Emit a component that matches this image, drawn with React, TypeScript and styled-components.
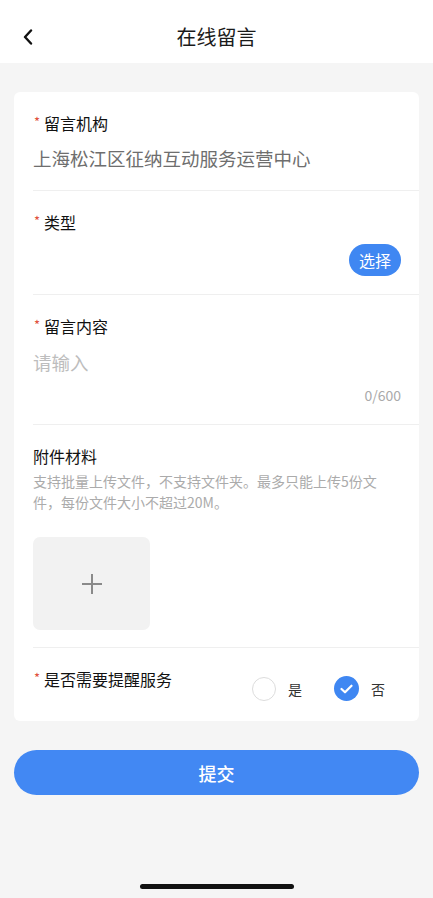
import React, { useState } from "react";
import styled, { createGlobalStyle } from "styled-components";

const GlobalStyle = createGlobalStyle`
  html, body { margin: 0; padding: 0; background: #f5f5f5; }
  body { font-family: "Noto Sans CJK SC", "Noto Sans", sans-serif; -webkit-font-smoothing: antialiased; }
  * { box-sizing: border-box; }
`;

const Page = styled.div`
  width: 433px;
  min-height: 898px;
  background: #f5f5f5;
  display: flex;
  flex-direction: column;
`;

const Header = styled.header`
  height: 63px;
  padding-top: 10px;
  background: #fff;
  display: flex;
  align-items: center;
  justify-content: center;
  position: relative;
`;

const BackButton = styled.button`
  position: absolute;
  left: 18px;
  top: 26px;
  width: 20px;
  height: 22px;
  padding: 0;
  border: none;
  background: transparent;
  display: flex;
  align-items: center;
  justify-content: center;
`;

const Title = styled.h1`
  margin: 0;
  font-size: 20px;
  font-weight: 400;
  color: #1a1a1a;
  line-height: 28px;
`;

const Card = styled.div`
  margin: 29px 14px 0;
  background: #fff;
  border-radius: 6px;
  overflow: hidden;
`;

const Section = styled.div<{ $last?: boolean; $pb: number }>`
  margin-left: 19px;
  padding: 20px 18px ${(p) => p.$pb}px 0;
  border-bottom: ${(p) => (p.$last ? "none" : "1px solid #efefef")};
`;

const Label = styled.div`
  display: flex;
  align-items: flex-start;
  height: 22px;
  font-size: 16px;
  line-height: 22px;
  color: #111;
  font-weight: 400;
`;

const Star = styled.span`
  color: #e0503c;
  font-size: 13px;
  width: 10px;
  margin-left: 1px;
  line-height: 20px;
`;

const Value = styled.div<{ $placeholder?: boolean }>`
  margin-top: ${(p) => (p.$placeholder ? 12 : 11)}px;
  font-size: 18.5px;
  line-height: 26px;
  height: 26px;
  color: ${(p) => (p.$placeholder ? "#bdbdbd" : "#6e6e6e")};
`;

const RightRow = styled.div`
  display: flex;
  justify-content: flex-end;
  margin-top: 11px;
`;

const Pill = styled.button`
  height: 32px;
  padding: 0 10px;
  border: none;
  border-radius: 16px;
  background: #3f87f2;
  color: #fff;
  font-family: inherit;
  font-size: 16px;
  line-height: 32px;
`;

const Counter = styled.div`
  margin-top: 10px;
  text-align: right;
  font-size: 14px;
  line-height: 20px;
  height: 20px;
  color: #aaa;
`;

const Desc = styled.div`
  margin-top: 4px;
  max-width: 350px;
  font-size: 14px;
  line-height: 21px;
  color: #ababab;
`;

const UploadBox = styled.div`
  margin-top: 24px;
  width: 117px;
  height: 93px;
  border-radius: 7px;
  background: #f2f2f2;
  display: flex;
  align-items: center;
  justify-content: center;
`;

const RemindRow = styled.div`
  display: flex;
  align-items: flex-start;
`;

const RadioGroup = styled.div`
  margin-left: auto;
  margin-right: 16px;
  margin-top: 8px;
  display: flex;
  gap: 32px;
`;

const RadioItem = styled.label`
  display: flex;
  align-items: center;
  gap: 12px;
  font-size: 14px;
  color: #333;
  height: 25px;
  cursor: pointer;
`;

const Circle = styled.span<{ $checked: boolean }>`
  width: ${(p) => (p.$checked ? 25 : 24)}px;
  height: ${(p) => (p.$checked ? 25 : 24)}px;
  border-radius: 50%;
  border: ${(p) => (p.$checked ? "none" : "1.5px solid #dcdcdc")};
  background: ${(p) => (p.$checked ? "#3f87f2" : "#fff")};
  display: flex;
  align-items: center;
  justify-content: center;
`;

const Submit = styled.button`
  margin: 29px 14px 0;
  height: 45px;
  border: none;
  border-radius: 23px;
  background: #4288f3;
  color: #fff;
  font-family: inherit;
  font-size: 18px;
  font-weight: 500;
`;

const HomeIndicator = styled.div`
  margin: 89px auto 0;
  width: 154px;
  height: 5px;
  border-radius: 3px;
  background: #111;
`;

const Check = () => (
  <svg width="13" height="10" viewBox="0 0 13 10">
    <path d="M1.5 5 L5 8.3 L11.5 1.7" fill="none" stroke="#fff" strokeWidth="2.2" strokeLinecap="round" strokeLinejoin="round" />
  </svg>
);

export default function App() {
  const [remind, setRemind] = useState(false);
  return (
    <>
      <GlobalStyle />
      <Page>
        <Header>
          <BackButton aria-label="返回">
            <svg width="12" height="16" viewBox="0 0 12 16">
              <path d="M9 1.5 L3 8 L9 14.5" fill="none" stroke="#111" strokeWidth="2.4" strokeLinecap="round" strokeLinejoin="round" />
            </svg>
          </BackButton>
          <Title>在线留言</Title>
        </Header>

        <Card>
          <Section $pb={19}>
            <Label><Star>*</Star>留言机构</Label>
            <Value>上海松江区征纳互动服务运营中心</Value>
          </Section>

          <Section $pb={18}>
            <Label><Star>*</Star>类型</Label>
            <RightRow>
              <Pill>选择</Pill>
            </RightRow>
          </Section>

          <Section $pb={19}>
            <Label><Star>*</Star>留言内容</Label>
            <Value $placeholder>请输入</Value>
            <Counter>0/600</Counter>
          </Section>

          <Section $pb={17}>
            <Label>附件材料</Label>
            <Desc>支持批量上传文件，不支持文件夹。最多只能上传5份文件，每份文件大小不超过20M。</Desc>
            <UploadBox>
              <svg width="22" height="22" viewBox="0 0 22 22">
                <path d="M11 1 V21 M1 11 H21" stroke="#8a8a8a" strokeWidth="2" />
              </svg>
            </UploadBox>
          </Section>

          <Section $last $pb={20}>
            <RemindRow>
              <Label><Star>*</Star>是否需要提醒服务</Label>
              <RadioGroup>
                <RadioItem onClick={() => setRemind(true)}>
                  <Circle $checked={remind}>{remind && <Check />}</Circle>
                  是
                </RadioItem>
                <RadioItem onClick={() => setRemind(false)}>
                  <Circle $checked={!remind}>{!remind && <Check />}</Circle>
                  否
                </RadioItem>
              </RadioGroup>
            </RemindRow>
          </Section>
        </Card>

        <Submit>提交</Submit>
        <HomeIndicator />
      </Page>
    </>
  );
}
